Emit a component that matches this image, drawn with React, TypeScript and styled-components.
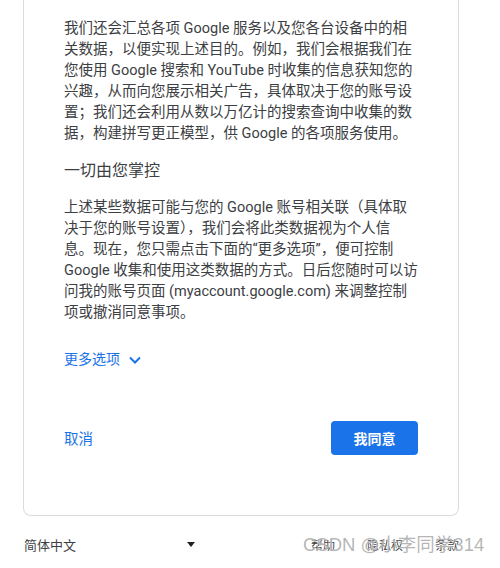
import { createGlobalStyle, styled } from "styled-components"

const GlobalStyle = createGlobalStyle`
    html, body {
        margin: 0;
        padding: 0;
        background: #fff;
    }
    body {
        font-family: Roboto, "Noto Sans CJK SC", sans-serif;
        color: #3c4043;
    }
`

const paragraphs = {
    collect:
        "我们还会汇总各项 Google 服务以及您各台设备中的相关数据，以便实现上述目的。例如，我们会根据我们在您使用 Google 搜索和 YouTube 时收集的信息获知您的兴趣，从而向您展示相关广告，具体取决于您的账号设置；我们还会利用从数以万亿计的搜索查询中收集的数据，构建拼写更正模型，供 Google 的各项服务使用。",
    control:
        "上述某些数据可能与您的 Google 账号相关联（具体取决于您的账号设置），我们会将此类数据视为个人信息。现在，您只需点击下面的“更多选项”，便可控制 Google 收集和使用这类数据的方式。日后您随时可以访问我的账号页面 (myaccount.google.com) 来调整控制项或撤消同意事项。",
}

const footerLinks = ["帮助", "隐私权", "条款"]

const App = () => {
    return (
        <Page>
            <GlobalStyle />
            <Card>
                <Paragraph>{paragraphs.collect}</Paragraph>
                <Heading>一切由您掌控</Heading>
                <Paragraph>{paragraphs.control}</Paragraph>
                <MoreOptions>
                    更多选项
                    <svg width="16" height="16" viewBox="0 0 16 16">
                        <path d="M3 5.5 L8 10.5 L13 5.5" fill="none" stroke="#1a73e8" strokeWidth="2" />
                    </svg>
                </MoreOptions>
                <Actions>
                    <TextButton>取消</TextButton>
                    <PrimaryButton>我同意</PrimaryButton>
                </Actions>
            </Card>
            <Footer>
                <LanguageSelect>
                    <span>简体中文</span>
                    <Caret />
                </LanguageSelect>
                <FooterLinks>
                    {footerLinks.map((link) => (
                        <FooterLink key={link}>{link}</FooterLink>
                    ))}
                </FooterLinks>
                <Watermark>CSDN @小李同学314</Watermark>
            </Footer>
        </Page>
    )
}

const Page = styled.div`
    width: 436px;
    margin-left: 23px;
`

const Card = styled.section`
    border: 1px solid #dadce0;
    border-top: none;
    border-radius: 0 0 8px 8px;
    padding: 18px 40px 60px;
    display: flex;
    flex-direction: column;
`

const Paragraph = styled.p`
    margin: 0;
    font-size: 14.5px;
    line-height: 21px;
    color: #3c4043;
`

const Heading = styled.h2`
    margin: 15px 0 13.5px;
    font-size: 16px;
    line-height: 24px;
    font-weight: 400;
    color: #3c4043;
`

const MoreOptions = styled.div`
    margin-top: 26px;
    display: flex;
    align-items: center;
    gap: 7px;
    font-size: 14px;
    line-height: 21px;
    font-weight: 400;
    color: #1a73e8;

    svg {
        margin-top: 1px;
    }
`

const Actions = styled.div`
    margin-top: 51px;
    display: flex;
    justify-content: space-between;
    align-items: center;
`

const TextButton = styled.span`
    font-size: 14.5px;
    font-weight: 400;
    color: #1a73e8;
`

const PrimaryButton = styled.button`
    width: 87px;
    height: 34px;
    border: none;
    border-radius: 4px;
    background: #1a73e8;
    color: #fff;
    font-family: inherit;
    font-size: 14px;
    font-weight: 700;
`

const Footer = styled.footer`
    position: relative;
    margin-top: 19px;
    display: flex;
    justify-content: space-between;
    align-items: center;
    height: 20px;
    font-size: 13px;
    color: #3c4043;
`

const LanguageSelect = styled.div`
    width: 171px;
    margin-left: 1px;
    display: flex;
    justify-content: space-between;
    align-items: center;
`

const Caret = styled.span`
    width: 0;
    height: 0;
    border-left: 4px solid transparent;
    border-right: 4px solid transparent;
    border-top: 5px solid #202124;
`

const FooterLinks = styled.div`
    display: flex;
    gap: 32px;
    margin-right: 0;
    font-size: 12px;
`

const FooterLink = styled.span`
    color: #3c4043;
`

const Watermark = styled.span`
    position: absolute;
    left: 280px;
    top: -1px;
    font-family: "Liberation Sans", "Noto Sans CJK SC", sans-serif;
    font-size: 18.5px;
    line-height: 22px;
    color: rgba(150, 150, 150, 0.7);
    text-shadow: 0 0 1px #fff;
    white-space: nowrap;
    pointer-events: none;
`

export default App
